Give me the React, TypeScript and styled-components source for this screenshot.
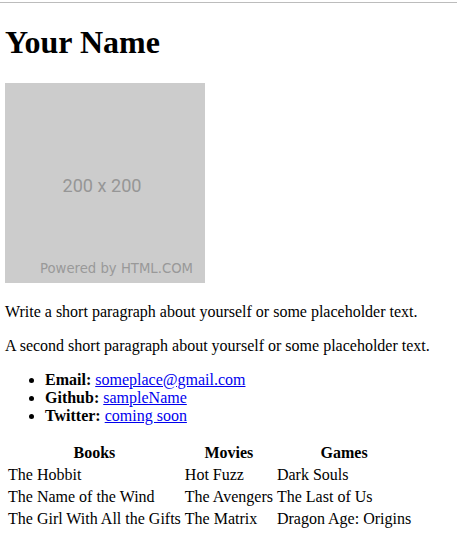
import React from "react";
import styled, { createGlobalStyle } from "styled-components";

const Global = createGlobalStyle`
  html, body { margin: 0; padding: 0; background: #fff; }
  body {
    font-family: "Liberation Serif", "Times New Roman", serif;
    font-size: 16px;
    color: #000;
  }
`;

const Page = styled.div`
  margin-top: 2px;
  border-top: 1px solid #bcbcbc;
  padding: 0 5px;
`;

const Title = styled.h1`
  font-size: 32px;
  font-weight: bold;
  margin: 21.44px 0;
`;

const Figure = styled.div`
  margin: 0;
`;

const Para = styled.p`
  margin: 16px 0;
`;

const Links = styled.ul`
  margin: 16px 0;
  padding-left: 40px;
  list-style: disc;
`;

const Label = styled.b`
  font-weight: bold;
`;

const Link = styled.a`
  color: #0000ee;
  text-decoration: underline;
`;

const Table = styled.table`
  border-spacing: 2px;
  border-collapse: separate;
  font-size: 16px;
`;

const Head = styled.th`
  padding: 1px;
  font-weight: bold;
  text-align: center;
`;

const Cell = styled.td`
  padding: 1px;
  text-align: left;
`;

const Placeholder = () => (
  <svg width="200" height="200" viewBox="0 0 200 200" style={{ verticalAlign: "baseline" }}>
    <rect width="200" height="200" fill="#cccccc" />
    <text
      x="57.5"
      y="108.5"
      fontFamily="Roboto, 'Liberation Sans', sans-serif"
      fontSize="19"
      fill="#969696"
      textLength="79"
      lengthAdjust="spacingAndGlyphs"
    >
      200 x 200
    </text>
    <text
      x="35"
      y="190"
      fontFamily="'DejaVu Sans', Verdana, sans-serif"
      fontSize="14"
      fill="#999999"
      textLength="153"
      lengthAdjust="spacingAndGlyphs"
    >
      Powered by HTML.COM
    </text>
  </svg>
);

const rows: [string, string, string][] = [
  ["The Hobbit", "Hot Fuzz", "Dark Souls"],
  ["The Name of the Wind", "The Avengers", "The Last of Us"],
  ["The Girl With All the Gifts", "The Matrix", "Dragon Age: Origins"],
];

export default function App() {
  return (
    <>
      <Global />
      <Page>
        <Title>Your Name</Title>
        <Figure>
          <Placeholder />
        </Figure>
        <Para>Write a short paragraph about yourself or some placeholder text.</Para>
        <Para>A second short paragraph about yourself or some placeholder text.</Para>
        <Links>
          <li>
            <Label>Email:</Label> <Link href="#">someplace@gmail.com</Link>
          </li>
          <li>
            <Label>Github:</Label> <Link href="#">sampleName</Link>
          </li>
          <li>
            <Label>Twitter:</Label> <Link href="#">coming soon</Link>
          </li>
        </Links>
        <Table>
          <thead>
            <tr>
              <Head>Books</Head>
              <Head>Movies</Head>
              <Head>Games</Head>
            </tr>
          </thead>
          <tbody>
            {rows.map((r) => (
              <tr key={r[0]}>
                {r.map((c) => (
                  <Cell key={c}>{c}</Cell>
                ))}
              </tr>
            ))}
          </tbody>
        </Table>
      </Page>
    </>
  );
}
